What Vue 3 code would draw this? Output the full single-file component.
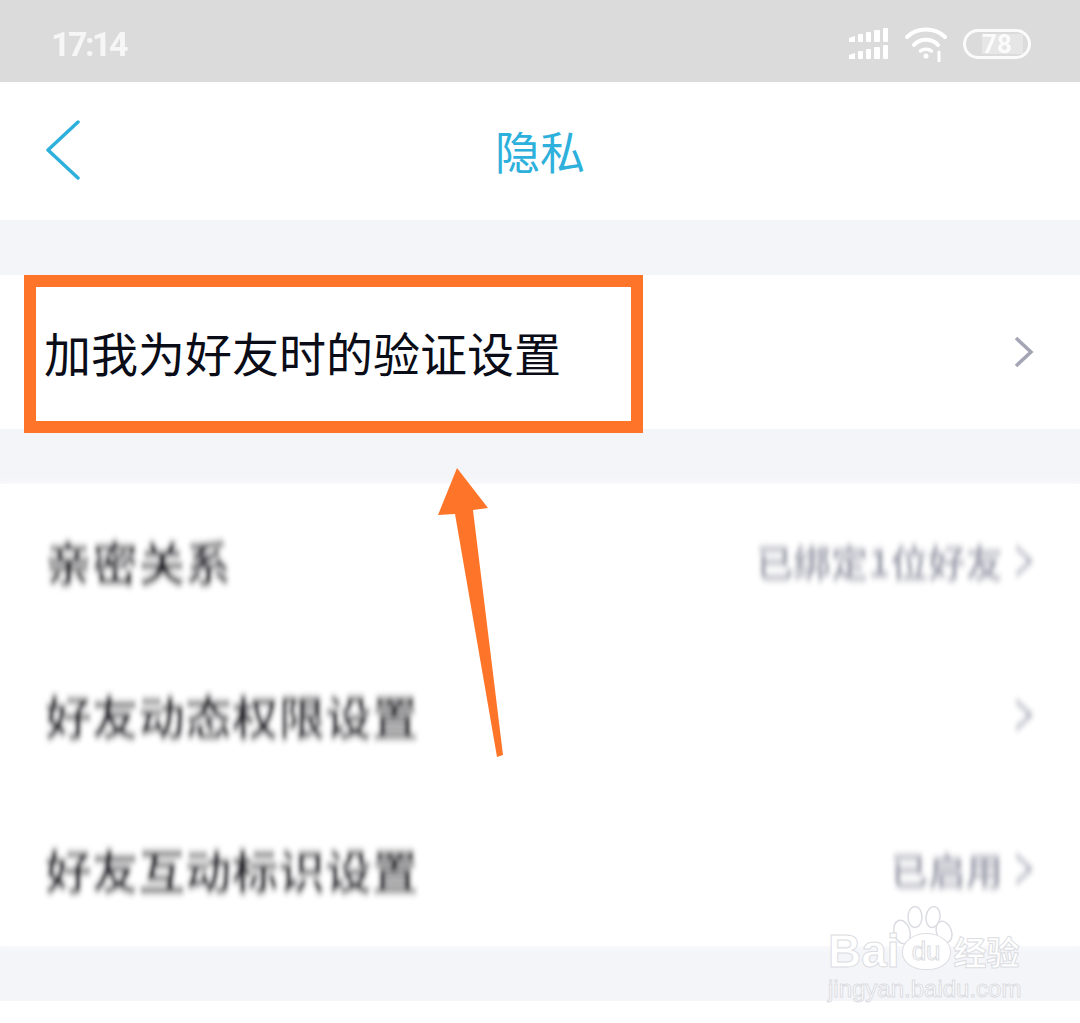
<template>
  <div class="screen">
    <div class="status-bar">
      <span class="time">17:14</span>
      <div class="status-icons">
        <svg class="signal" width="42" height="32" viewBox="0 0 42 32">
          <g v-for="row in [0, 17]" :key="row" fill="#fff">
            <path :d="`M1 ${row + 10}l6-2v6H1z`" />
            <rect x="10" :y="row + 6" width="5" :height="8" rx="1" />
            <rect x="18" :y="row + 4" width="5" :height="10" rx="1" />
            <rect x="26" :y="row + 2" width="6" :height="12" rx="1" />
            <rect x="35" :y="row" width="5" :height="14" rx="1" />
          </g>
        </svg>
        <svg class="wifi" width="44" height="36" viewBox="0 0 44 36" fill="none" stroke="#fff" stroke-width="4" stroke-linecap="round">
          <path d="M3 11C13 1 31 1 41 11" />
          <path d="M10 19C16 12 28 12 34 19" />
          <path d="M16.500 25C19 22.500 25 22.500 27.500 25" stroke-width="3.500" />
          <circle cx="22" cy="30" r="2.500" fill="#fff" stroke="none" />
          <path d="M35 26v9" stroke-width="3" />
        </svg>
        <div class="battery">
          <span class="battery-fill"></span>
          <span class="battery-num">78</span>
        </div>
      </div>
    </div>

    <div class="nav-bar">
      <svg class="back" width="36" height="62" viewBox="0 0 36 62" fill="none">
        <path d="M33 2L3 30L33 58" stroke="#2eb0dc" stroke-width="3.500" stroke-linecap="round" stroke-linejoin="round" />
      </svg>
      <span class="title">隐私</span>
    </div>

    <div class="gap"></div>
    <div class="row first">
      <span class="label sharp">加我为好友时的验证设置</span>
      <svg class="chevron" width="22" height="36" viewBox="0 0 22 36" fill="none">
        <path d="M3 4L18 18L3 32" stroke="#a3a5b5" stroke-width="3.500" />
      </svg>
    </div>
    <div class="gap"></div>

    <svg class="defs" width="0" height="0">
      <filter id="shake" x="-5%" y="-20%" width="110%" height="140%">
        <feGaussianBlur stdDeviation="2 3.600" />
      </filter>
    </svg>

    <div class="group">
      <div v-for="item in rows" :key="item.label" class="row blurred">
        <span class="label">{{ item.label }}</span>
        <span class="row-right">
          <span v-if="item.value" class="value">{{ item.value }}</span>
          <svg class="chevron" width="22" height="36" viewBox="0 0 22 36" fill="none">
            <path d="M3 4L18 18L3 32" stroke="#a3a5b5" stroke-width="3.500" />
          </svg>
        </span>
      </div>
    </div>
    <div class="gap"></div>
    <div class="tail"></div>

    <div class="highlight"></div>
    <svg class="arrow" width="70" height="300" viewBox="0 0 70 300">
      <path d="M22 0L3 47L20 46L62 289L68 287L38 42L53 40Z" fill="#fe7529" />
    </svg>

    <div class="watermark">
      <svg class="paw" width="62" height="56" viewBox="0 0 62 56" fill="#fff" stroke="#dcdde2" stroke-width="1.500">
        <ellipse cx="10" cy="26" rx="8" ry="12" transform="rotate(-15 10 26)" />
        <ellipse cx="23" cy="11" rx="7" ry="10.500" />
        <ellipse cx="41" cy="11" rx="7" ry="10.500" transform="rotate(8 41 11)" />
        <ellipse cx="52" cy="26" rx="7.500" ry="11" transform="rotate(-20 52 26)" />
      </svg>
      <div class="mark-line">
        <span class="mark-en">Bai</span>
        <span class="mark-du">du</span>
        <span class="mark-zh">经验</span>
      </div>
      <div class="mark-url">jingyan.baidu.com</div>
    </div>
  </div>
</template>

<script setup>
const rows = [
  { label: '亲密关系', value: '已绑定1位好友' },
  { label: '好友动态权限设置', value: '' },
  { label: '好友互动标识设置', value: '已启用' },
]
</script>

<style>
html,
body {
  margin: 0;
  background: #ffffff;
}
</style>

<style scoped>
.screen {
  position: relative;
  width: 1080px;
  height: 1023px;
  overflow: hidden;
  background: #ffffff;
  font-family: "Noto Sans CJK SC", "Liberation Sans", sans-serif;
}

.status-bar {
  height: 82px;
  padding: 0 49px 0 51px;
  display: flex;
  align-items: center;
  justify-content: space-between;
  box-sizing: border-box;
  background: #dbdbdb;
}

.time {
  font-family: Roboto, "Liberation Sans", sans-serif;
  font-size: 34px;
  font-weight: 700;
  letter-spacing: -2.500px;
  color: #f6f6f6;
  margin-top: 6px;
  filter: blur(0.5px);
}

.status-icons {
  display: flex;
  align-items: center;
  margin-top: 6px;
  filter: blur(0.4px);
}

.signal {
  margin-right: 14px;
}

.wifi {
  margin-right: 15px;
}

.battery {
  position: relative;
  width: 68px;
  height: 30px;
  box-sizing: border-box;
  border: 3px solid #fbfbfb;
  border-radius: 15px;
  display: flex;
  align-items: center;
  justify-content: center;
}

.battery-fill {
  position: absolute;
  left: 16px;
  top: 2px;
  bottom: 2px;
  width: 41px;
  background: #e6e6e6;
}

.battery-num {
  position: relative;
  font-family: Roboto, "Liberation Sans", sans-serif;
  font-size: 26px;
  font-weight: 700;
  line-height: 1;
  color: #fbfbfb;
}

.nav-bar {
  position: relative;
  height: 138px;
  display: flex;
  align-items: center;
  justify-content: center;
}

.back {
  position: absolute;
  left: 45px;
  top: 38px;
}

.title {
  font-size: 45px;
  line-height: 1;
  color: #2eb0dc;
  font-weight: 400;
  margin-top: -2px;
}

.gap {
  height: 55px;
  background: #f4f5f9;
}

.tail {
  height: 21px;
}

.defs {
  position: absolute;
}

.row {
  height: 154px;
  padding: 0 45px;
  display: flex;
  align-items: center;
  justify-content: space-between;
  box-sizing: border-box;
  background: #ffffff;
}

.label {
  font-size: 46.700px;
  line-height: 1;
  color: #1c1d26;
}

.sharp {
  font-size: 47px;
  color: #0a0d18;
  margin: -2px 0 0 -1px;
}

.blurred {
  filter: url(#shake);
  font-weight: 700;
}

.row-right {
  display: flex;
  align-items: center;
  gap: 10px;
}

.value {
  font-size: 37.500px;
  line-height: 1;
  color: #a0a2b0;
}

.highlight {
  position: absolute;
  left: 24px;
  top: 275px;
  width: 619px;
  height: 158px;
  box-sizing: border-box;
  border: 12px solid #fe7529;
}

.arrow {
  position: absolute;
  left: 435px;
  top: 468px;
}

.watermark {
  position: absolute;
  left: 828px;
  top: 906px;
  width: 200px;
  height: 110px;
  color: #ffffff;
}

.paw {
  position: absolute;
  left: 64px;
  top: 0;
}

.mark-line {
  position: absolute;
  left: 0;
  top: 23px;
  display: flex;
  align-items: center;
  height: 44px;
  -webkit-text-stroke: 1px #dcdde2;
  font-family: "Liberation Sans", sans-serif;
}

.mark-en {
  font-size: 46px;
  font-weight: 700;
  line-height: 1;
}

.mark-du {
  position: relative;
  font-size: 26px;
  line-height: 35px;
  width: 49px;
  margin-left: 2px;
  text-align: center;
  border-radius: 50% 50% 46% 46%;
  border: 1px solid #dcdde2;
  box-sizing: border-box;
  background: #ffffff;
  -webkit-text-stroke: 1px #dcdde2;
  color: transparent;
}

.mark-zh {
  margin-left: 3px;
  font-family: "Noto Sans CJK SC", sans-serif;
  font-size: 33px;
  font-weight: 700;
  line-height: 1;
}

.mark-url {
  position: absolute;
  left: 0;
  top: 71px;
  font-family: "Liberation Sans", sans-serif;
  font-size: 24px;
  line-height: 1;
  white-space: nowrap;
  -webkit-text-stroke: 1px #dcdde2;
}
</style>
